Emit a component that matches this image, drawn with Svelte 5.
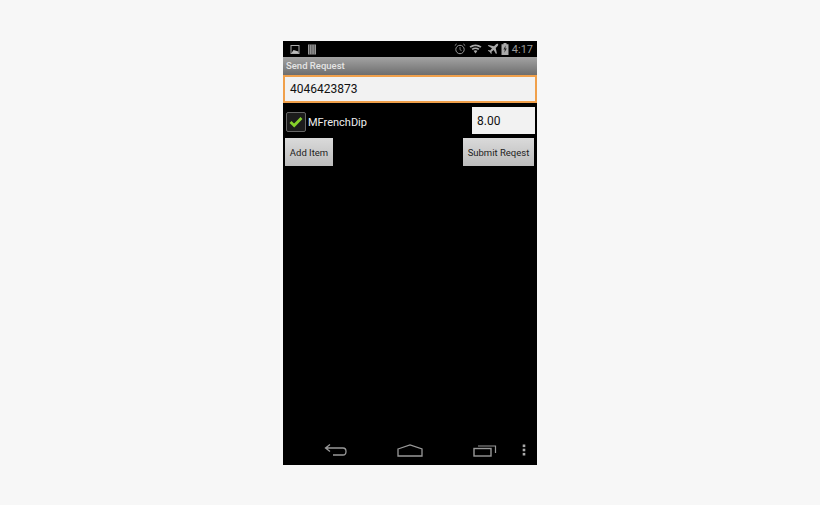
<script lang="ts">
  let amount = '8.00';
  let phone = '4046423873';
</script>

<div class="page">
  <div class="phone">
    <div class="status">
      <svg class="left-icons" width="27" height="11" viewBox="0 0 27 11">
        <rect x="1" y="1.5" width="8" height="8" fill="none" stroke="#aaa" />
        <path d="M1.5 9 L3.5 6 L8.5 7.5 L8.5 9 Z" fill="#bbb" />
        <path d="M18 .5h8v10h-8z" fill="#999" />
        <path d="M19.6 .5v10M21.9 .5v10M24.2 .5v10" stroke="#333" stroke-width="0.7" />
      </svg>
      <div class="right-icons">
        <svg width="12" height="12" viewBox="0 0 12 12">
          <circle cx="6" cy="6.5" r="4.2" fill="none" stroke="#999" stroke-width="1" />
          <path d="M6 4v2.7l1.6 1" fill="none" stroke="#999" stroke-width="0.8" />
          <path d="M0.8 2.6 2.6 1M11.2 2.6 9.4 1" stroke="#999" stroke-width="1" />
        </svg>
        <svg class="wifi" width="13" height="10" viewBox="0 0 13 10">
          <path d="M0.5 2.6C4 -0.2 9 -0.2 12.5 2.6L11.4 3.8C8.3 1.6 4.7 1.6 1.6 3.8Z" fill="#aaa" />
          <path d="M2.6 4.7C5 3 8 3 10.4 4.7L9.3 5.9C7.5 4.8 5.5 4.8 3.7 5.9Z" fill="#aaa" />
          <path d="M4.6 6.8C5.8 6 7.2 6 8.4 6.8L6.5 9.4Z" fill="#aaa" />
        </svg>
        <svg class="plane" width="12" height="12" viewBox="0 0 12 12">
          <path d="M11 1 C10.4 .4 9.4 .8 8.8 1.5 L7 3.2 L1.6 2 L.8 2.8 L5 5.2 L3.2 7.4 L1.5 7.1 L.9 7.7 L2.8 9 L4.1 11 L4.7 10.4 L4.5 8.7 L6.7 6.9 L9 11 L9.9 10.2 L8.7 4.9 L10.4 3.2 C11.1 2.5 11.5 1.6 11 1 Z" fill="#aaa" />
        </svg>
        <svg class="battery" width="8" height="12" viewBox="0 0 8 12">
          <path d="M2.5 0h3v1.2h2V12H.5V1.2h2z" fill="#aaa" />
          <path d="M4.6 2.6 2.4 6.6h1.5L3.3 9.8 5.8 5.6H4.3Z" fill="#222" />
        </svg>
        <span class="clock">4:17</span>
      </div>
    </div>

    <div class="titlebar">Send Request</div>

    <div class="phone-field">{phone}</div>

    <div class="item-row">
      <div class="check-wrap">
        <div class="checkbox">
          <svg width="14" height="12" viewBox="0 0 14 12">
            <path d="M1.5 6 5.2 9.5 12.5 2" fill="none" stroke="#86d02a" stroke-width="2.8" />
          </svg>
        </div>
        <span class="item-name">MFrenchDip</span>
      </div>
      <div class="amount">{amount}</div>
    </div>

    <div class="button-row">
      <button class="add">Add Item</button>
      <button class="submit">Submit Reqest</button>
    </div>

    <div class="spacer"></div>

    <div class="navbar">
      <svg class="back" width="24" height="14" viewBox="0 0 24 14">
        <path d="M6 1.5 1.5 5 6 8.5M1.5 5H19C23 5 23 12 19 12H9" fill="none" stroke="#999" stroke-width="1.3" />
      </svg>
      <svg class="home" width="26" height="13" viewBox="0 0 26 13">
        <path d="M1 5 13 1 25 5V12H1Z" fill="none" stroke="#999" stroke-width="1.3" />
      </svg>
      <svg class="recents" width="24" height="13" viewBox="0 0 24 13">
        <rect x="1" y="4.5" width="17" height="7.5" fill="none" stroke="#999" stroke-width="1.4" />
        <path d="M5 2H22.5V9" fill="none" stroke="#999" stroke-width="1.2" />
      </svg>
      <svg class="menu" width="4" height="12" viewBox="0 0 4 12">
        <rect x="0.7" y="0.5" width="2.6" height="2.6" fill="#aaa" />
        <rect x="0.7" y="4.7" width="2.6" height="2.6" fill="#aaa" />
        <rect x="0.7" y="8.9" width="2.6" height="2.6" fill="#aaa" />
      </svg>
    </div>
  </div>
</div>

<style>
  :global(body) {
    margin: 0;
    background: #f7f7f7;
  }
  .page {
    height: 505px;
    display: flex;
    justify-content: center;
    padding-top: 41px;
    box-sizing: border-box;
    font-family: Roboto, 'Liberation Sans', sans-serif;
  }
  .phone {
    width: 254px;
    height: 424px;
    background: #000;
    display: flex;
    flex-direction: column;
  }
  .status {
    height: 16px;
    flex: none;
    display: flex;
    align-items: center;
    justify-content: space-between;
    padding: 0 4px 0 7px;
  }
  .left-icons {
    display: block;
  }
  .right-icons {
    display: flex;
    align-items: center;
  }
  .wifi {
    margin-left: 3.5px;
  }
  .plane {
    margin-left: 4.5px;
  }
  .battery {
    margin-left: 2px;
  }
  .clock {
    margin-left: 3px;
    font-size: 11px;
    color: #999;
  }
  .titlebar {
    height: 18px;
    flex: none;
    background: linear-gradient(#a3a3a3, #6e6e6e);
    color: #e4e4e4;
    font-size: 9.5px;
    font-weight: 500;
    line-height: 18px;
    padding-left: 3px;
    box-sizing: border-box;
  }
  .phone-field {
    height: 28px;
    flex: none;
    box-sizing: border-box;
    background: #f2f2f2;
    border: 2px solid #f0a04b;
    color: #111;
    font-size: 12px;
    line-height: 24px;
    padding-left: 5px;
  }
  .item-row {
    flex: none;
    display: flex;
    align-items: center;
    justify-content: space-between;
    padding: 4px 2px 0 3px;
  }
  .check-wrap {
    display: flex;
    align-items: center;
    gap: 2px;
    padding-top: 3px;
  }
  .checkbox {
    width: 20px;
    height: 20px;
    box-sizing: border-box;
    background: #1c1c1c;
    border: 1px solid #666;
    border-radius: 2px;
    display: flex;
    align-items: center;
    justify-content: center;
  }
  .item-name {
    color: #eee;
    font-size: 11px;
  }
  .amount {
    width: 63px;
    height: 27px;
    box-sizing: border-box;
    background: #f2f2f2;
    color: #111;
    font-size: 12px;
    line-height: 28px;
    padding-left: 5px;
  }
  .button-row {
    flex: none;
    display: flex;
    justify-content: space-between;
    padding: 4px 3px 0 2px;
  }
  button {
    height: 28px;
    border: none;
    padding: 0;
    background: linear-gradient(#dadada, #bcbcbc);
    color: #222;
    font-family: inherit;
    font-size: 9.5px;
  }
  .add {
    width: 48px;
  }
  .submit {
    width: 71px;
  }
  .spacer {
    flex: 1;
  }
  .navbar {
    height: 30px;
    flex: none;
    position: relative;
  }
  .navbar svg {
    position: absolute;
  }
  .back {
    left: 41px;
    top: 8px;
  }
  .home {
    left: 114px;
    top: 9px;
  }
  .recents {
    left: 190px;
    top: 9px;
  }
  .menu {
    left: 239px;
    top: 9px;
  }
</style>
